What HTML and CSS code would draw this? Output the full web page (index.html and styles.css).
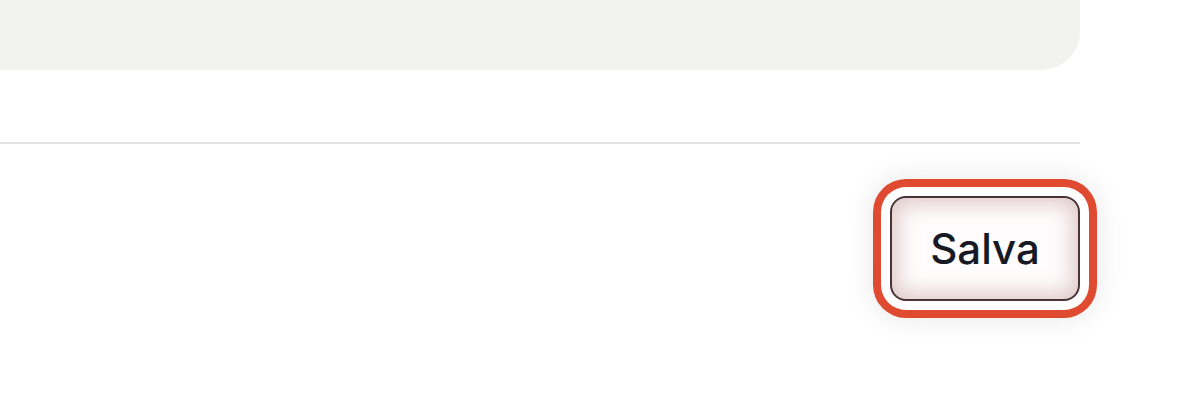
FILE: index.html
```html
<!DOCTYPE html>
<html lang="it">
<head>
<meta charset="utf-8">
<link rel="stylesheet" href="styles.css">
</head>
<body>
<div class="page">
  <div class="panel"></div>
  <hr class="divider">
  <div class="footer">
    <button class="save-btn" type="button">Salva</button>
  </div>
</div>
</body>
</html>
```
FILE: styles.css
```css
html, body {
  margin: 0;
  padding: 0;
  background: #ffffff;
}
.page {
  width: 1080px;
  display: flex;
  flex-direction: column;
  font-family: Inter, "Liberation Sans", sans-serif;
}
.panel {
  height: 70px;
  background: #f2f2f0;
  border-radius: 0 0 38px 0;
}
.divider {
  margin: 72px 0 0 0;
  border: 0;
  height: 2px;
  background: #e3e3e1;
}
.footer {
  display: flex;
  justify-content: flex-end;
  padding: 52px 0 90px 0;
}
.save-btn {
  width: 190px;
  height: 105px;
  padding: 0;
  border: 2px solid #4a3236;
  border-radius: 16px;
  background: #fefcfc;
  font-family: Inter, "Liberation Sans", sans-serif;
  font-size: 42px;
  font-weight: 500;
  color: #171a25;
  box-shadow:
    inset 0 0 20px 6px rgba(200, 160, 160, 0.55),
    0 0 0 9px #ffffff,
    0 0 0 17px #df4a30,
    0 0 26px 18px rgba(120, 110, 110, 0.16);
  cursor: pointer;
}
```
